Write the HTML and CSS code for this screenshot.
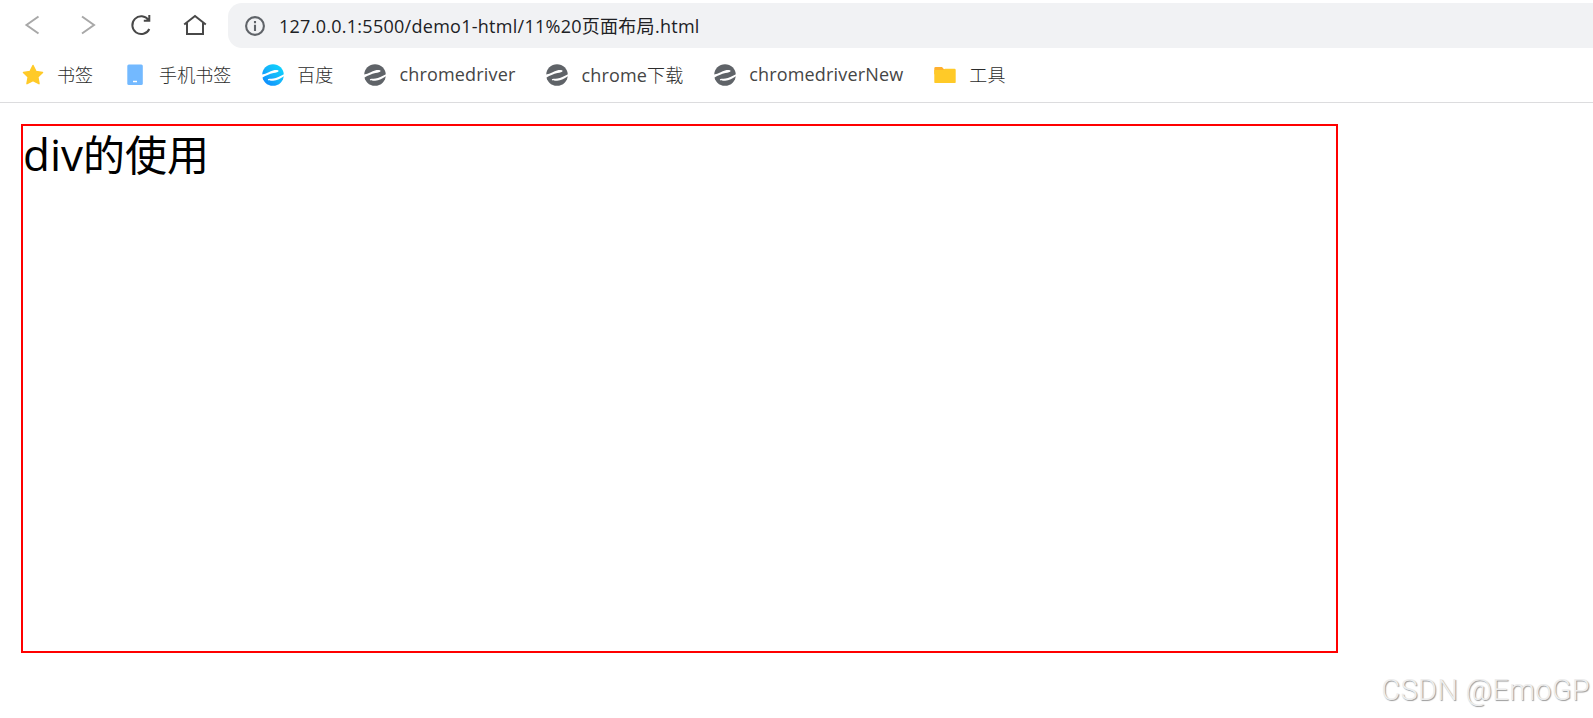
FILE: index.html
```html
<!DOCTYPE html>
<html lang="zh-CN">

<head>
    <meta charset="UTF-8">
    <title>页面布局</title>
    <link rel="stylesheet" href="styles.css">
</head>

<body>

    <!-- shared logo shape for the bookmarks -->
    <svg class="defs">
        <defs>
            <linearGradient id="blue" x1="1" y1="0" x2="0" y2="1">
                <stop offset="0" stop-color="#08dcff" />
                <stop offset="0.5" stop-color="#16b4fa" />
                <stop offset="1" stop-color="#0a80ff" />
            </linearGradient>
            <symbol id="logo" viewBox="0 0 22 22">
                <circle cx="11" cy="11" r="10.800" />
                <path d="M-1 10.800C4 10 8 7 11 6.400c2.500-.6 5.800-.5 5.600.6-.1 1-2.600 1.500-5.100 2.100C7.500 10 3.500 11.800 1 13.300L-1 14z" fill="#fff" />
                <path d="M23 9.800C18 12 15 14 11.500 14.500c-2.800.3-5.500 0-5.700 1-.2 1.200 2.600 1.500 5.300 1.200C15.500 16.200 19.500 13.800 23 11.500z" fill="#fff" />
            </symbol>
        </defs>
    </svg>

    <div class="toolbar">
        <div class="nav">
            <svg class="arrow" viewBox="0 0 24 24"><path d="M17.500 4.500 5.500 13l12 8.500" /></svg>
            <svg class="arrow" viewBox="0 0 24 24"><path d="M7 4.500 19 13 7 21.500" /></svg>
            <svg viewBox="0 0 24 24"><path d="M20.300 17A8.900 8.900 0 1 1 19.500 8M20.300 3v5.700h-5.500" /></svg>
            <svg viewBox="0 0 24 24"><path d="M1.200 12.500 12 4 22.800 12.500M4 11V22h16V11" /></svg>
        </div>
        <div class="address">
            <svg viewBox="0 0 20 20">
                <circle cx="10" cy="10" r="8.900" />
                <path d="M10 5v2.200M10 8.800v6.200" />
            </svg>
            <span>127.0.0.1:5500/demo1-html/11%20页面布局.html</span>
        </div>
    </div>

    <div class="bookmarks">
        <a>
            <svg viewBox="0 0 22 22"><path d="M11 1.500l3 6 6.500.9-4.700 4.600 1.200 6.700L11 16.700 5 19.700l1.200-6.700L1.500 8.400 8 7.500z" fill="#ffca28" stroke="#ffca28" stroke-width="1.500" stroke-linejoin="round" /></svg>
            <span class="cjk">书签</span>
        </a>
        <a>
            <svg viewBox="0 0 22 22"><rect x="3.300" y=".5" width="15.500" height="20.500" rx="1.500" fill="#73b9ff" /><path d="M9 17.500h4" stroke="#fff" stroke-width="1.500" /></svg>
            <span class="cjk">手机书签</span>
        </a>
        <a>
            <svg viewBox="0 0 22 22"><use href="#logo" fill="url(#blue)" /></svg>
            <span class="cjk">百度</span>
        </a>
        <a>
            <svg viewBox="0 0 22 22"><use href="#logo" /></svg>
            <span>chromedriver</span>
        </a>
        <a>
            <svg viewBox="0 0 22 22"><use href="#logo" /></svg>
            <span>chrome<span class="cjk">下载</span></span>
        </a>
        <a>
            <svg viewBox="0 0 22 22"><use href="#logo" /></svg>
            <span>chromedriverNew</span>
        </a>
        <a>
            <svg viewBox="0 0 22 22">
                <path d="M.3 4.300q0-1.300 1.300-1.300h6.400l2 2.200h10v5H.3z" fill="#ffb02e" />
                <path d="M.3 6h8.700l2-1.300h9.500q1.200 0 1.200 1.200v12q0 1.200-1.200 1.200h-19q-1.200 0-1.200-1.200z" fill="#ffca28" />
            </svg>
            <span class="cjk">工具</span>
        </a>
    </div>

    <div class="box"><span class="latin">div</span>的使用</div>

    <div class="watermark">CSDN @EmoGP</div>

</body>

</html>
```

FILE: styles.css
```css
body {
    margin: 0;
    height: 718px;
    overflow: hidden;
    position: relative;
    background-color: #fff;
    font-family: "Open Sans", "Noto Sans CJK SC", sans-serif;
}

svg {
    flex: none;
}

.defs {
    position: absolute;
    width: 0;
    height: 0;
}

.toolbar {
    display: flex;
    height: 45px;
    padding-top: 3px;
}

.nav {
    display: flex;
    align-items: center;
    gap: 30px;
    width: 207px;
    padding-left: 21px;
}

.nav svg {
    width: 24px;
    height: 24px;
    margin-top: -3px;
    fill: none;
    stroke: #484848;
    stroke-width: 2;
}

.nav .arrow {
    stroke: #a8a8a8;
}

.address {
    flex: 1;
    display: flex;
    align-items: center;
    gap: 14px;
    padding-left: 17px;
    border-radius: 14px 0 0 14px;
    background-color: #f1f2f4;
    color: #202124;
    font-size: 18px;
    letter-spacing: 0.27px;
    white-space: nowrap;
}

.address > span {
    margin-top: -2px;
}

.address svg {
    width: 20px;
    height: 20px;
    fill: none;
    stroke: #5f6368;
    stroke-width: 2.1;
}

.bookmarks {
    display: flex;
    align-items: center;
    gap: 31px;
    height: 54px;
    padding-left: 22px;
    border-bottom: 1px solid #dcdcde;
    color: #454545;
    font-size: 18px;
    letter-spacing: 0.17px;
    white-space: nowrap;
}

.bookmarks a {
    display: flex;
    align-items: center;
    gap: 13px;
}

.bookmarks a > span {
    margin-top: -2px;
}

.bookmarks svg {
    width: 22px;
    height: 22px;
    fill: #5f6368;
}

.bookmarks .cjk {
    color: #2c2c2c;
    font-weight: 300;
    letter-spacing: 0.05px;
}

.box {
    box-sizing: border-box;
    width: 1317px;
    height: 529px;
    margin: 21px 0 0 21px;
    border: 2px solid #f00;
    color: #000;
    font-size: 42px;
    line-height: 56px;
}

.box .latin {
    font-size: 44px;
}

.watermark {
    position: absolute;
    right: 3px;
    bottom: 11px;
    font-family: Roboto, sans-serif;
    font-weight: 300;
    font-size: 29px;
    letter-spacing: 0.3px;
    color: #ededed;
    text-shadow: 1px 1px 1px #999;
}
```
